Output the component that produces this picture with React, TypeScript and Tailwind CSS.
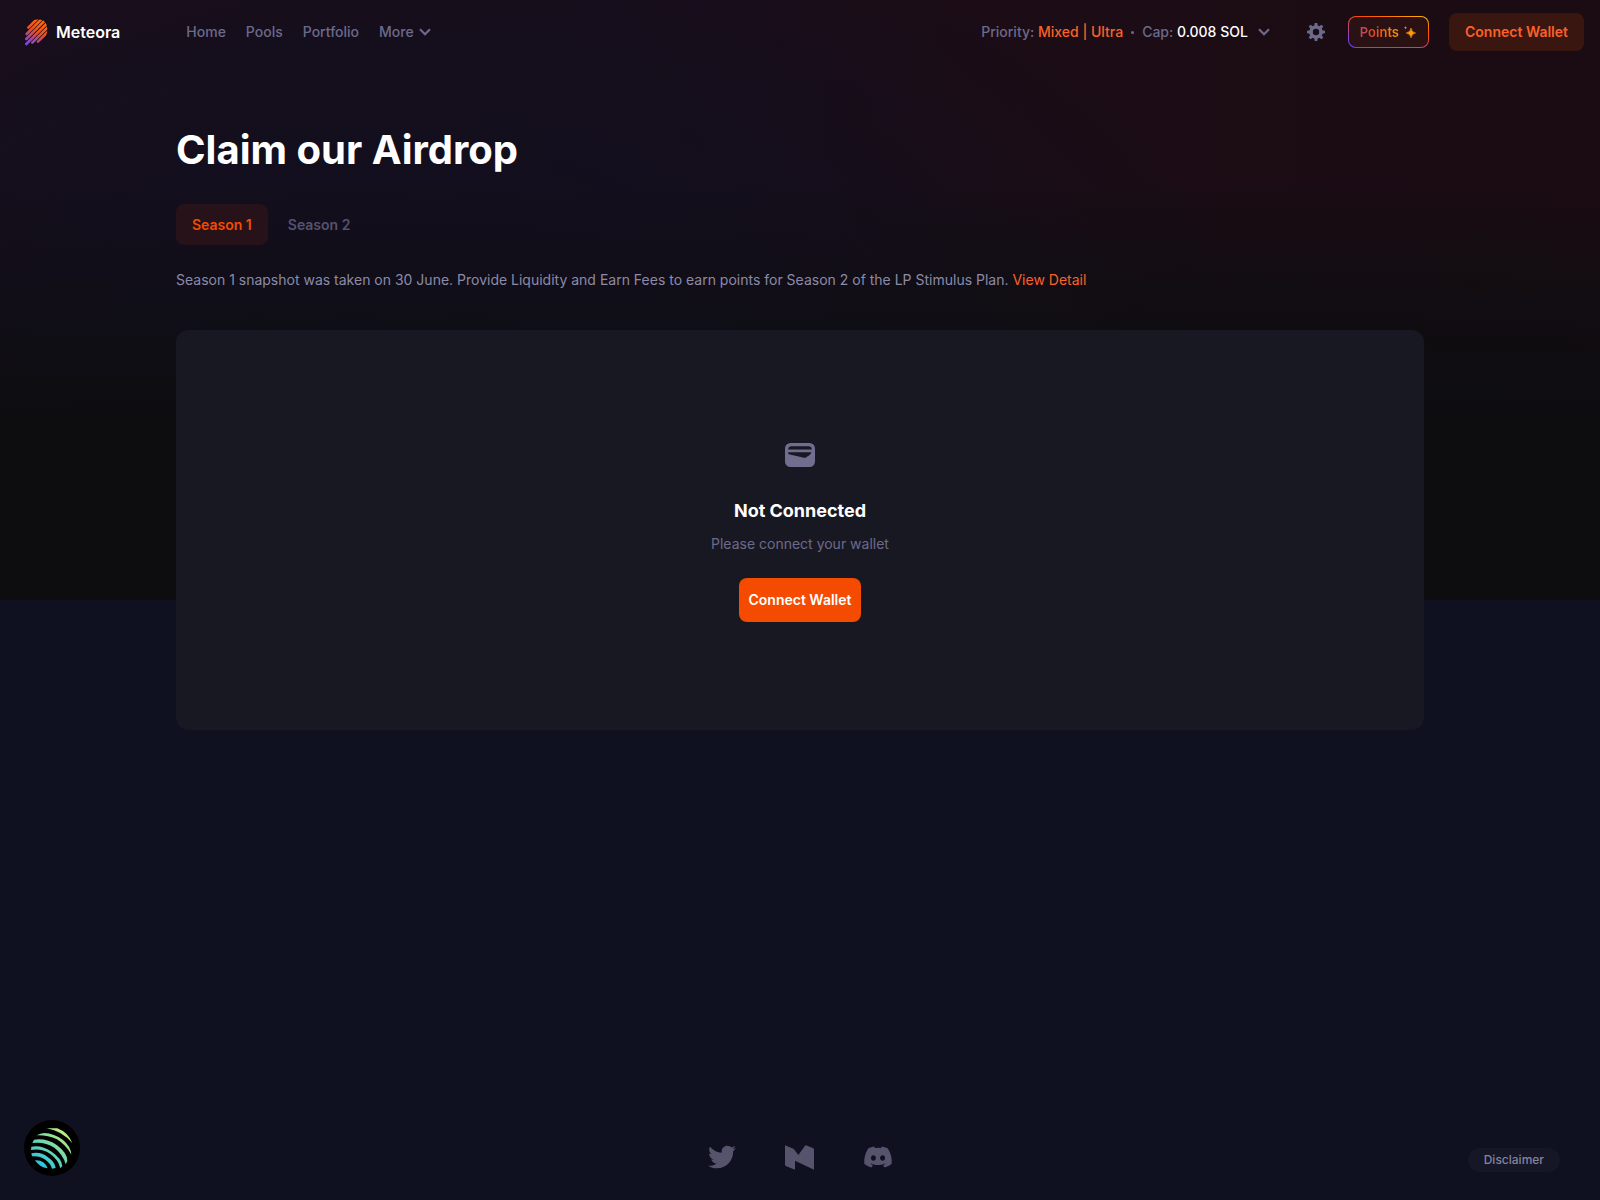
import React from 'react';
import { FaTwitter, FaDiscord } from 'react-icons/fa';

function MeteoraLogo() {
  return (
    <svg width="24" height="27" viewBox="42 40 72 81" fill="none" aria-hidden="true">
      <defs>
        <linearGradient id="meteor" x1="50" y1="120" x2="92" y2="44" gradientUnits="userSpaceOnUse">
          <stop offset="0" stopColor="#6e45ff" />
          <stop offset="0.3" stopColor="#a54a94" />
          <stop offset="0.6" stopColor="#f0501f" />
          <stop offset="1" stopColor="#ff6a0a" />
        </linearGradient>
        <clipPath id="head">
          <path d="M40 125V85C50 55 68 41 84 41 103 41 113 55 112 72 111 92 100 105 86 112L50 125Z" />
        </clipPath>
      </defs>
      <g stroke="url(#meteor)" strokeWidth="7.8" strokeLinecap="round" clipPath="url(#head)">
        <path d="M55 66 90 31" />
        <path d="M50 85 100 35" />
        <path d="M49 100 110 39" />
        <path d="M49 115 120 44" />
        <path d="M67 111 125 53" />
        <path d="M84 108 125 67" />
      </g>
    </svg>
  );
}

function Chevron() {
  return (
    <svg width="12" height="8" viewBox="0 0 12 8" fill="none" aria-hidden="true">
      <path d="M1 1.2 6 6.2 11 1.2" stroke="currentColor" strokeWidth="2.2" />
    </svg>
  );
}

function Gear() {
  return (
    <svg width="18" height="18" viewBox="-9 -9 18 18" fill="currentColor" aria-hidden="true">
      {[0, 45, 90, 135, 180, 225, 270, 315].map((angle) => (
        <path key={angle} d="M-1.8-5.5-1.3-9H1.3L1.8-5.5Z" transform={`rotate(${angle})`} />
      ))}
      <circle r="5" fill="none" stroke="currentColor" strokeWidth="3.6" />
    </svg>
  );
}

function Sparkles() {
  return (
    <svg width="12" height="12" viewBox="0 0 12 12" fill="#ff9a0a" aria-hidden="true">
      <path d="M7 2Q7.6 6.4 11.6 7 7.6 7.6 7 11.8 6.4 7.6 2.2 7 6.4 6.4 7 2Z" stroke="#ff9a0a" strokeWidth="0.6" />
      <path d="M1.5.2Q1.8 1.5 3 1.7 1.8 2 1.5 3.2 1.2 2 0 1.7 1.2 1.5 1.5.2Z" />
    </svg>
  );
}

function WalletIcon() {
  return (
    <svg width="30" height="36" viewBox="0 -6 30 36" aria-hidden="true">
      <rect width="30" height="24" rx="5.5" fill="#6f6e8e" />
      <path d="M3.2 6.4Q3.4 3.3 6.5 3.3H23.5Q26.6 3.3 26.8 6.4Z" fill="#181823" />
      <path d="M3.2 9.2H26.6L25 11.8 20.5 14.7Q19.8 15 19 14.7L3.8 11.2Q3.2 11 3.2 10Z" fill="#181823" />
    </svg>
  );
}

function MediumIcon() {
  return (
    <svg width="29" height="25" viewBox="0 0 87 73" fill="currentColor" aria-hidden="true">
      <path d="M0 0 25 10Q27 11 28 13L40 29 60 1Q61 0 63 0L85 9Q87 10 87 12V73L30 46V73L2 62Q0 61 0 59Z" />
    </svg>
  );
}

function JupiterLogo() {
  return (
    <svg width="56" height="56" viewBox="42 44 168 168" aria-hidden="true">
      <defs>
        <linearGradient id="jup" x1="80" y1="185" x2="165" y2="75" gradientUnits="userSpaceOnUse">
          <stop offset="0.1" stopColor="#2cc5dc" />
          <stop offset="0.5" stopColor="#6fd8b0" />
          <stop offset="1" stopColor="#c6ee78" />
        </linearGradient>
      </defs>
      <circle cx="126" cy="128" r="84" fill="#000" />
      <g fill="url(#jup)">
        <path d="M110 69H142Q176 82 187 114 157 77 110 69Z" />
        <path d="M80 90Q92 84 102 83 133 84 159 104 183 124 184 148 168 119 141 102 113 89 80 90Z" />
        <path d="M67 113 72 103Q110 98 141 120 173 144 172 167L167 177Q159 147 133 127 103 108 67 113Z" />
        <path d="M63 134 64 124Q97 119 126 140 155 160 157 182L151 189Q146 164 120 145 93 128 63 134Z" />
        <path d="M66 153 64 144Q91 138 113 155 135 170 137 188L126 190Q122 174 106 163 88 151 66 153Z" />
        <path d="M75 165Q103 163 113 189 89 187 75 165Z" />
      </g>
    </svg>
  );
}

function Header() {
  return (
    <header className="flex h-16 items-center justify-between pr-4 pl-6">
      <div className="flex items-center">
        <a href="#" className="flex items-center gap-2 text-base font-semibold text-white">
          <MeteoraLogo />
          Meteora
        </a>
        <nav className="ml-[66px] flex items-center gap-5 text-sm font-medium text-[#6c6a8a]">
          <a href="#">Home</a>
          <a href="#">Pools</a>
          <a href="#">Portfolio</a>
          <button type="button" className="flex items-center gap-[5px]">
            More
            <Chevron />
          </button>
        </nav>
      </div>
      <div className="flex items-center">
        <button type="button" className="flex items-center text-sm font-medium text-[#6c6a8a]">
          <span>
            Priority: <span className="text-[#fa6128]">Mixed | Ultra</span>
          </span>
          <span className="mx-2 size-[3px] rounded-full bg-[#6c6a8a]" />
          <span className="mr-2.5">
            Cap: <span className="text-white">0.008 SOL</span>
          </span>
          <Chevron />
        </button>
        <button type="button" aria-label="Settings" className="ml-[37px] text-[#6c6a8a]">
          <Gear />
        </button>
        <a
          href="#"
          className="ml-[23px] rounded-lg bg-[linear-gradient(15deg,#6e45ff_8%,#ff4a03_65%,#ffbb00_100%)] p-px"
        >
          <span className="flex h-[30px] items-center gap-[5px] rounded-[7px] bg-[#291114] pr-3 pl-[11px]">
            <span className="bg-[linear-gradient(75deg,#a04a80_0%,#f04a10_45%,#ffa808_100%)] bg-clip-text text-[13px] leading-5 font-semibold text-transparent">
              Points
            </span>
            <Sparkles />
          </span>
        </a>
        <button
          type="button"
          className="ml-5 h-[38px] rounded-lg bg-[#3a1611] px-4 text-sm font-semibold text-[#fa6128]"
        >
          Connect Wallet
        </button>
      </div>
    </header>
  );
}

export default function App() {
  return (
    <div className="relative isolate flex min-h-screen flex-col bg-[#0f1020] font-['Inter',sans-serif]">
      <div className="absolute inset-x-0 top-0 -z-10 h-[600px] bg-[linear-gradient(180deg,transparent_30%,#0d0d10_72%),radial-gradient(55%_75%_at_22%_55%,#110f1e_0%,#110f1ea0_55%,transparent_100%),radial-gradient(50%_45%_at_80%_75%,#100d12_0%,#100d12a0_50%,transparent_100%),linear-gradient(90deg,#1c0d1a_0%,#190d1b_40%,#1b0c16_60%,#1b0c13_100%)]" />
      <Header />
      <main className="mx-auto w-full max-w-7xl flex-1 px-4 pt-[62px]">
        <h1 className="text-[40px] leading-12 font-bold text-white">Claim our Airdrop</h1>
        <div className="mt-[30px] flex gap-1">
          <button
            type="button"
            className="h-[41px] rounded-lg bg-[#27121a] px-4 text-sm font-semibold text-[#f54b00]"
          >
            Season 1
          </button>
          <button type="button" className="h-[41px] px-4 text-sm font-semibold text-[#55526f]">
            Season 2
          </button>
        </div>
        <p className="mt-[25px] text-sm text-[#8c8aa8]">
          Season 1 snapshot was taken on 30 June. Provide Liquidity and Earn Fees to earn points for Season 2 of
          the LP Stimulus Plan.{' '}
          <a href="#" className="text-[#fa6128]">
            View Detail
          </a>
        </p>
        <section className="mt-10 flex min-h-[400px] flex-col items-center justify-center rounded-xl bg-[#181823] pb-0.5">
          <WalletIcon />
          <h2 className="mt-6 text-lg font-bold text-white">Not Connected</h2>
          <p className="mt-[9px] text-sm text-[#6c6a8a]">Please connect your wallet</p>
          <button
            type="button"
            className="mt-6 h-11 rounded-lg bg-[#f54b00] px-2.5 text-sm font-semibold text-white"
          >
            Connect Wallet
          </button>
        </section>
      </main>
      <footer className="grid grid-cols-3 items-end px-6 pb-6">
        <a href="#" aria-label="Jupiter" className="justify-self-start">
          <JupiterLogo />
        </a>
        <div className="mb-1 flex h-[30px] items-center gap-12 justify-self-center text-[#55546c]">
          <a href="#" aria-label="Twitter" className="flex w-[30px] justify-center">
            <FaTwitter size={28} />
          </a>
          <a href="#" aria-label="Medium" className="flex w-[30px] justify-center">
            <MediumIcon />
          </a>
          <a href="#" aria-label="Discord" className="flex w-[30px] justify-center">
            <FaDiscord size={30} />
          </a>
        </div>
        <button
          type="button"
          className="mr-4 mb-1 rounded-full bg-[#151626] px-4 py-1 text-xs font-medium text-[#8583a0] justify-self-end"
        >
          Disclaimer
        </button>
      </footer>
    </div>
  );
}
